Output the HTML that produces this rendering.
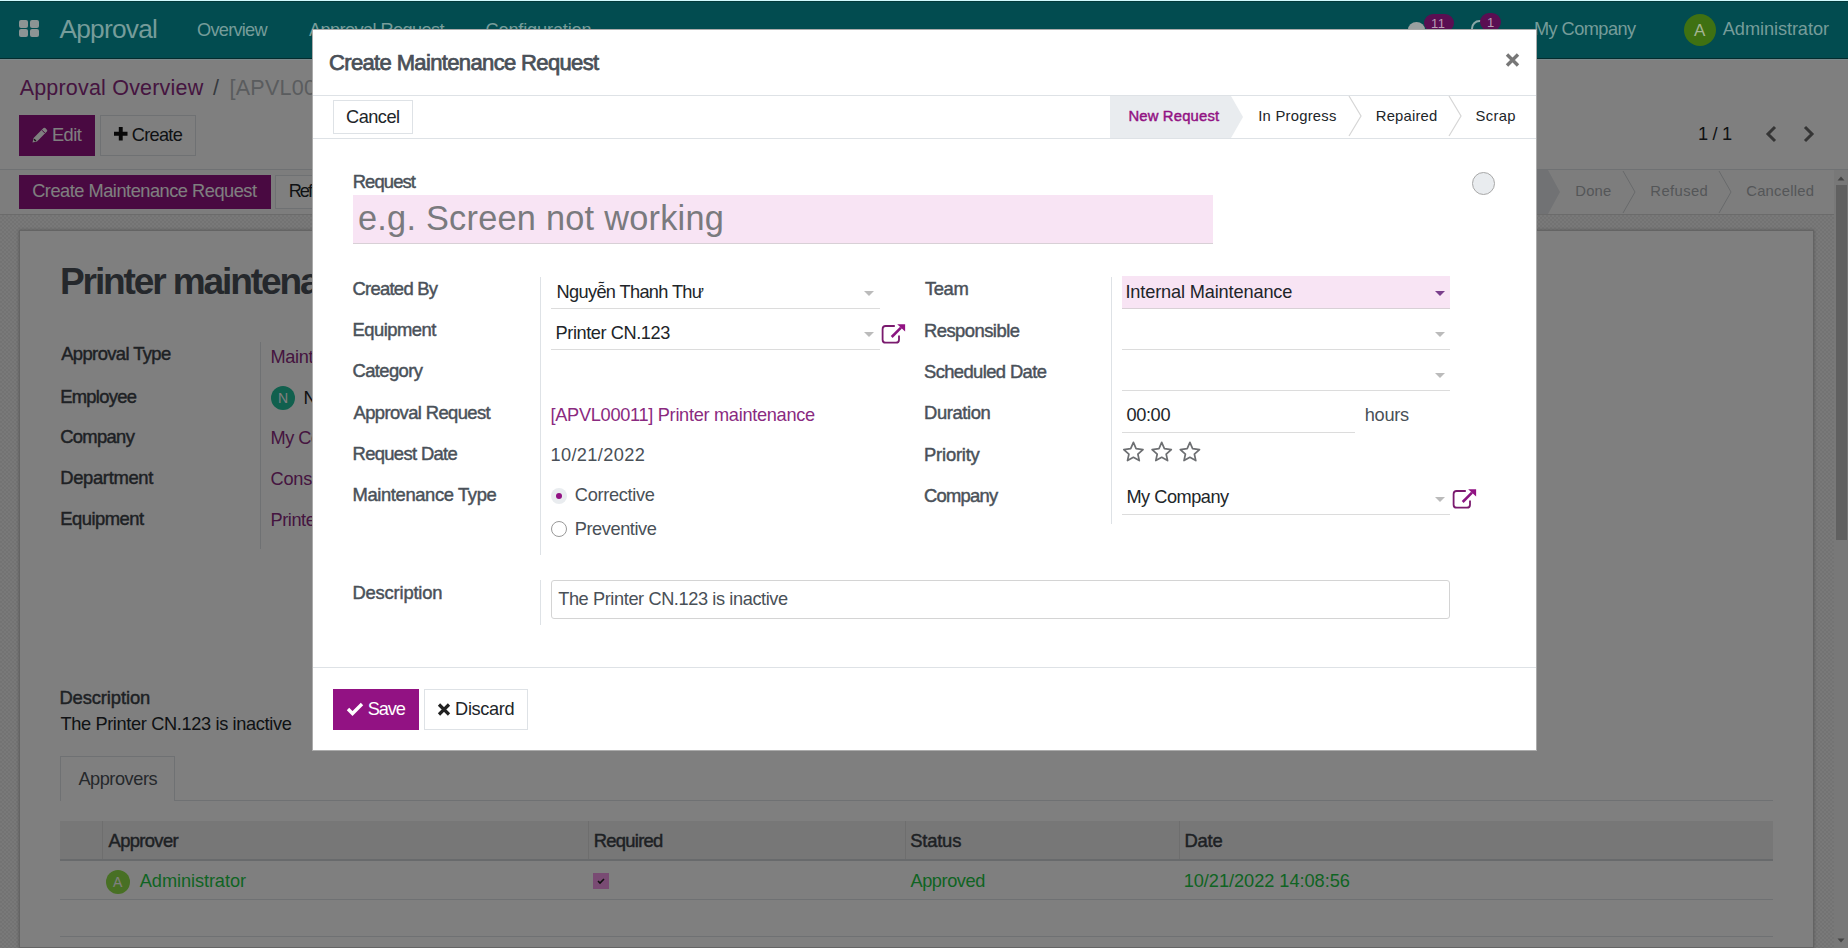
<!DOCTYPE html>
<html><head><meta charset="utf-8">
<style>
html,body{margin:0;padding:0;width:1848px;height:948px;overflow:hidden;background:#fff;font-family:"Liberation Sans",sans-serif;}
.a{position:absolute;box-sizing:border-box;}
.t{position:absolute;white-space:nowrap;font-family:"Liberation Sans",sans-serif;}
#page{position:absolute;left:0;top:0;width:1848px;height:948px;overflow:hidden;background:#fff;}
.checker{background-color:#f2f2f2;background-image:linear-gradient(45deg,#e6e6e6 25%,transparent 25%,transparent 75%,#e6e6e6 75%),linear-gradient(45deg,#e6e6e6 25%,transparent 25%,transparent 75%,#e6e6e6 75%);background-size:4px 4px;background-position:0 0,2px 2px;}
#overlay{position:absolute;left:0;top:0;width:1848px;height:948px;background:rgba(0,0,0,.5);}
#modal{position:absolute;left:312px;top:29px;width:1225px;height:722px;background:#fff;overflow:hidden;border:1px solid rgba(0,0,0,.33);box-sizing:border-box;}
.hl{position:absolute;height:1px;}
.vl{position:absolute;width:1px;}
</style></head><body>
<div id="page">
  <!-- control panel -->
  <div class="a" style="left:0;top:169px;width:1848px;height:1px;background:#dee2e6;"></div>
  <div class="a" style="left:19px;top:115px;width:76px;height:41px;background:#921283;"></div>
  <svg class="a" style="left:31px;top:126px" width="18" height="18" viewBox="0 0 18 18"><path d="M1.5 16.5 L2.6 12 L12.5 2.1 Q13.4 1.2 14.3 2.1 L15.9 3.7 Q16.8 4.6 15.9 5.5 L6 15.4 Z" fill="#fff"/><path d="M11 4.2 L13.8 7" stroke="#921283" stroke-width="1"/><path d="M3 13.2 L4.8 15" stroke="#333" stroke-width="1.6"/></svg>
  <div class="a" style="left:100px;top:115px;width:96px;height:41px;border:1px solid #dee2e6;background:#fff"></div>
  <svg class="a" style="left:113.7px;top:127px" width="14" height="14" viewBox="0 0 14 14"><path d="M4.8 0H8.7V4.8H13.5V8.7H8.7V13.5H4.8V8.7H0V4.8H4.8Z" fill="#111"/></svg>
  <!-- pager chevrons -->
  <svg class="a" style="left:1764px;top:125px" width="14" height="18" viewBox="0 0 14 18"><path d="M11 2 L4 9 L11 16" fill="none" stroke="#6a6a6a" stroke-width="3"/></svg>
  <svg class="a" style="left:1802px;top:125px" width="14" height="18" viewBox="0 0 14 18"><path d="M3 2 L10 9 L3 16" fill="none" stroke="#6a6a6a" stroke-width="3"/></svg>

  <!-- statusbar -->
  <div class="a" style="left:0;top:170px;width:1834px;height:44px;background:#fbfbfb;"></div>
  <div class="a" style="left:0;top:214px;width:1834px;height:1px;background:#d6d6d6;"></div>
  <div class="a" style="left:19px;top:175px;width:252px;height:34px;background:#921283;"></div>
  <div class="a" style="left:275px;top:175px;width:90px;height:34px;border:1px solid #dee2e6;background:#fff"></div>
  <svg class="a" style="left:1300px;top:170px" width="534" height="44" viewBox="0 0 534 44">
    <path d="M0 0 H248 L260 22 L248 44 H0 Z" fill="#e2e5e8"/>
    <path d="M323 1 L335 22 L323 43" fill="none" stroke="#d0d3d6" stroke-width="1"/>
    <path d="M419 1 L431 22 L419 43" fill="none" stroke="#d0d3d6" stroke-width="1"/>
  </svg>

  <!-- sheet background -->
  <div class="a checker" style="left:0;top:215px;width:1834px;height:733px;"></div>
  <div class="a" style="left:19px;top:230px;width:1795px;height:718px;background:#fff;border:1px solid #c8c8c8;box-shadow:0 0 3px rgba(0,0,0,.25)"></div>
  <div class="vl" style="left:260px;top:342px;height:207px;background:#dee2e6"></div>
  <div class="a" style="left:271px;top:386px;width:24px;height:24px;border-radius:50%;background:#22c09c"></div>
  <div class="t" style="left:278px;top:389px;font-size:14px;line-height:18px;color:#fff">N</div>
  <!-- tab -->
  <div class="a" style="left:60px;top:756px;width:115px;height:45px;border:1px solid #dee2e6;border-bottom:none;background:#fff"></div>
  <div class="hl" style="left:175px;top:800px;width:1598px;background:#dee2e6"></div>
  <!-- table -->
  <div class="a" style="left:60px;top:821px;width:1713px;height:40px;background:#eeeeee;border-bottom:2px solid #d0d4d8"></div>
  <div class="vl" style="left:102px;top:821px;height:38px;background:#dcdcdc"></div>
  <div class="vl" style="left:588px;top:821px;height:38px;background:#dcdcdc"></div>
  <div class="vl" style="left:905px;top:821px;height:38px;background:#dcdcdc"></div>
  <div class="vl" style="left:1179px;top:821px;height:38px;background:#dcdcdc"></div>
  <div class="hl" style="left:60px;top:899px;width:1713px;background:#dee2e6"></div>
  <div class="hl" style="left:60px;top:936px;width:1713px;background:#dee2e6"></div>
  <div class="a" style="left:106px;top:870px;width:24px;height:24px;border-radius:50%;background:#90e048"></div>
  <div class="t" style="left:113px;top:873px;font-size:14px;line-height:18px;color:#fff">A</div>
  <div class="a" style="left:593px;top:873px;width:16px;height:16px;background:#f297e6;"></div>
  <svg class="a" style="left:595px;top:875px" width="12" height="12" viewBox="0 0 12 12"><path d="M3 6 L5 8 L9 4" fill="none" stroke="#222" stroke-width="1.6"/></svg>
  <!-- scrollbar -->
  <div class="a" style="left:1834px;top:170px;width:14px;height:778px;background:#f1f1f1"></div>
  <div class="a" style="left:1836px;top:185px;width:11px;height:355px;background:#c1c1c1"></div>
  <svg class="a" style="left:1836px;top:174px" width="10" height="8" viewBox="0 0 10 8"><path d="M1.5 6.5 L5 2.5 L8.5 6.5Z" fill="#8a8a8a"/></svg>
  <svg class="a" style="left:1836px;top:936px" width="10" height="8" viewBox="0 0 10 8"><path d="M1.5 2.5 L5 6.5 L8.5 2.5Z" fill="#8a8a8a"/></svg>
  <div class="t" style="left:19.7px;top:78px;font-size:21.5px;line-height:21.5px;color:#8a2a80;letter-spacing:0.19px;">Approval Overview</div><div class="t" style="left:213.0px;top:78px;font-size:21.5px;line-height:21.5px;color:#6c757d;letter-spacing:0.00px;">/</div><div class="t" style="left:229.5px;top:78px;font-size:21.5px;line-height:21.5px;color:#b4b8bc;letter-spacing:0.27px;">[APVL00011] Printer maintenance</div><div class="t" style="left:1698.0px;top:125px;font-size:18.2px;line-height:18.2px;color:#212529;letter-spacing:-0.32px;">1 / 1</div><div class="t" style="left:1575.3px;top:184px;font-size:14.8px;line-height:14.8px;color:#a9adb1;letter-spacing:0.17px;">Done</div><div class="t" style="left:1650.3px;top:184px;font-size:14.8px;line-height:14.8px;color:#a9adb1;letter-spacing:0.40px;">Refused</div><div class="t" style="left:1746.2px;top:184px;font-size:14.8px;line-height:14.8px;color:#a9adb1;letter-spacing:0.26px;">Cancelled</div><div class="t" style="left:60.0px;top:263px;font-size:37.1px;line-height:37.1px;font-weight:bold;color:#4a5058;letter-spacing:-2.13px;">Printer maintena</div><div class="t" style="left:61.2px;top:345px;font-size:18.4px;line-height:18.4px;color:#3c4248;letter-spacing:-0.60px;-webkit-text-stroke:0.45px #3c4248;">Approval Type</div><div class="t" style="left:60.2px;top:388px;font-size:18.4px;line-height:18.4px;color:#3c4248;letter-spacing:-0.71px;-webkit-text-stroke:0.45px #3c4248;">Employee</div><div class="t" style="left:60.2px;top:428px;font-size:18.4px;line-height:18.4px;color:#3c4248;letter-spacing:-0.67px;-webkit-text-stroke:0.45px #3c4248;">Company</div><div class="t" style="left:60.2px;top:469px;font-size:18.4px;line-height:18.4px;color:#3c4248;letter-spacing:-0.33px;-webkit-text-stroke:0.45px #3c4248;">Department</div><div class="t" style="left:60.2px;top:510px;font-size:18.4px;line-height:18.4px;color:#3c4248;letter-spacing:-0.50px;-webkit-text-stroke:0.45px #3c4248;">Equipment</div><div class="t" style="left:270.4px;top:348px;font-size:18.2px;line-height:18.2px;color:#8a2a80;letter-spacing:-0.30px;">Maintenance</div><div class="t" style="left:303.6px;top:389px;font-size:18.2px;line-height:18.2px;color:#212529;letter-spacing:-0.67px;">Nguyễn Thanh Thư</div><div class="t" style="left:270.5px;top:429px;font-size:18.2px;line-height:18.2px;color:#8a2a80;letter-spacing:-0.48px;">My Company</div><div class="t" style="left:270.5px;top:470px;font-size:18.2px;line-height:18.2px;color:#8a2a80;letter-spacing:-0.22px;">Consulting</div><div class="t" style="left:270.5px;top:511px;font-size:18.2px;line-height:18.2px;color:#8a2a80;letter-spacing:-0.43px;">Printer CN.123</div><div class="t" style="left:59.4px;top:689px;font-size:18.4px;line-height:18.4px;color:#3c4248;letter-spacing:-0.11px;-webkit-text-stroke:0.45px #3c4248;">Description</div><div class="t" style="left:60.4px;top:715px;font-size:18.2px;line-height:18.2px;color:#212529;letter-spacing:-0.35px;">The Printer CN.123 is inactive</div><div class="t" style="left:78.4px;top:770px;font-size:18.2px;line-height:18.2px;color:#4c5258;letter-spacing:-0.46px;">Approvers</div><div class="t" style="left:108.5px;top:832px;font-size:18.4px;line-height:18.4px;color:#3c4248;letter-spacing:-0.64px;-webkit-text-stroke:0.45px #3c4248;">Approver</div><div class="t" style="left:593.8px;top:832px;font-size:18.4px;line-height:18.4px;color:#3c4248;letter-spacing:-0.73px;-webkit-text-stroke:0.45px #3c4248;">Required</div><div class="t" style="left:910.2px;top:832px;font-size:18.4px;line-height:18.4px;color:#3c4248;letter-spacing:-0.20px;-webkit-text-stroke:0.45px #3c4248;">Status</div><div class="t" style="left:1184.4px;top:832px;font-size:18.4px;line-height:18.4px;color:#3c4248;letter-spacing:-0.17px;-webkit-text-stroke:0.45px #3c4248;">Date</div><div class="t" style="left:139.8px;top:872px;font-size:18.2px;line-height:18.2px;color:#1ec846;letter-spacing:-0.08px;">Administrator</div><div class="t" style="left:910.5px;top:872px;font-size:18.2px;line-height:18.2px;color:#1ec846;letter-spacing:-0.44px;">Approved</div><div class="t" style="left:1183.7px;top:872px;font-size:18.2px;line-height:18.2px;color:#1ec846;letter-spacing:-0.04px;">10/21/2022 14:08:56</div><div class="t" style="left:32.2px;top:182px;font-size:18.2px;line-height:18.2px;color:#fff;letter-spacing:-0.47px;">Create Maintenance Request</div><div class="t" style="left:51.9px;top:126px;font-size:18.2px;line-height:18.2px;color:#fff;letter-spacing:-0.47px;">Edit</div><div class="t" style="left:131.8px;top:126px;font-size:18.2px;line-height:18.2px;color:#212529;letter-spacing:-0.72px;">Create</div><div class="t" style="left:288.7px;top:182px;font-size:18.2px;line-height:18.2px;color:#212529;letter-spacing:-2.00px;">Refuse</div>
</div>
<div id="overlay"></div>
<div id="nav" style="position:absolute;left:0;top:0;width:1848px;height:60px;background:#024c50;">
  <div class="a" style="left:0;top:58px;width:1848px;height:1px;background:#042c2e;"></div>
  <div class="a" style="left:0;top:59px;width:1848px;height:1px;background:#7a898b;"></div>
  <div class="a" style="left:0;top:0;width:1848px;height:1px;background:#d0fbff"></div>
  <div class="a" style="left:0;top:1px;width:1848px;height:1px;background:#033a3a"></div>
  <div class="a" style="left:19px;top:20px;width:9px;height:8px;background:#8c9494;border-radius:2px;"></div>
  <div class="a" style="left:30px;top:20px;width:9px;height:8px;background:#8c9494;border-radius:2px;"></div>
  <div class="a" style="left:19px;top:29px;width:9px;height:8px;background:#8c9494;border-radius:2px;"></div>
  <div class="a" style="left:30px;top:29px;width:9px;height:8px;background:#8c9494;border-radius:2px;"></div>
  <div class="a" style="left:1408px;top:22px;width:17px;height:15px;background:#9aa0a0;border-radius:50%;"></div>
  <div class="a" style="left:1424px;top:14px;width:30px;height:18px;background:#5a0e52;border-radius:9px;"></div>
  <div class="t" style="left:1431px;top:17px;font-size:13px;line-height:14px;color:#b89ab4;letter-spacing:0.5px">11</div>
  <div class="a" style="left:1471px;top:20px;width:17px;height:17px;border:2.5px solid #8aa6a6;border-radius:50%;"></div>
  <div class="a" style="left:1480px;top:13px;width:21px;height:18px;background:#5a0e52;border-radius:9px;"></div>
  <div class="t" style="left:1487px;top:16px;font-size:13px;line-height:14px;color:#b89ab4">1</div>
  <div class="a" style="left:1684px;top:14px;width:32px;height:32px;background:#3f7112;border-radius:50%;"></div>
  <div class="t" style="left:1694px;top:22px;font-size:17px;line-height:17px;color:#a4b494">A</div>
  <div class="t" style="left:59.5px;top:16px;font-size:26.3px;line-height:26.3px;color:rgb(118,156,154);letter-spacing:-0.77px;">Approval</div><div class="t" style="left:197.0px;top:21px;font-size:18.2px;line-height:18.2px;color:rgb(118,156,154);letter-spacing:-0.74px;">Overview</div><div class="t" style="left:309.0px;top:21px;font-size:18.2px;line-height:18.2px;color:rgb(118,156,154);letter-spacing:-0.60px;">Approval Request</div><div class="t" style="left:485.5px;top:21px;font-size:18.2px;line-height:18.2px;color:rgb(118,156,154);letter-spacing:-0.17px;">Configuration</div><div class="t" style="left:1534.0px;top:20px;font-size:18.2px;line-height:18.2px;color:rgb(118,156,154);letter-spacing:-0.56px;">My Company</div><div class="t" style="left:1722.8px;top:20px;font-size:18.2px;line-height:18.2px;color:rgb(118,156,154);letter-spacing:-0.08px;">Administrator</div>
</div>

<div id="modal">
  <!-- positions inside modal are page coords minus (313,30) -->
  <div style="position:absolute;left:-313px;top:-30px;width:1848px;height:948px;">
    <!-- close x -->
    <svg class="a" style="left:1505px;top:53px" width="15" height="14" viewBox="0 0 15 14"><path d="M2 1.5 L13 12.5 M13 1.5 L2 12.5" stroke="#777" stroke-width="3.4"/></svg>
    <div class="hl" style="left:313px;top:95px;width:1223px;background:#dee2e6"></div>
    <div class="hl" style="left:313px;top:138px;width:1223px;background:#dee2e6"></div>
    <!-- cancel -->
    <div class="a" style="left:333px;top:100px;width:80px;height:34px;border:1px solid #dee2e6;"></div>
    <!-- statusbar -->
    <svg class="a" style="left:1110px;top:96px" width="426" height="42" viewBox="0 0 426 42">
      <path d="M0 0 H121 L133 21 L121 42 H0 Z" fill="#e9ecef"/>
      <path d="M239 0 L251 20 L239 40" fill="none" stroke="#d6d6d6" stroke-width="1.2"/>
      <path d="M339 0 L351 20 L339 40" fill="none" stroke="#d6d6d6" stroke-width="1.2"/>
    </svg>
    <!-- request field -->
    <div class="a" style="left:353px;top:195px;width:860px;height:49px;background:#f8e4f4;border-bottom:1px solid #d8d0d6"></div>
    <div class="a" style="left:1472px;top:172px;width:23px;height:23px;border-radius:50%;background:#e9ecef;border:1px solid #a8a8a8"></div>
    <!-- group lines -->
    <div class="vl" style="left:540px;top:277px;height:278px;background:#dee2e6"></div>
    <div class="vl" style="left:1111px;top:277px;height:247px;background:#dee2e6"></div>
    <div class="vl" style="left:540px;top:580px;height:45px;background:#dee2e6"></div>
    <!-- underlines left -->
    <div class="hl" style="left:551px;top:308px;width:329px;background:#dcdcdc"></div>
    <div class="hl" style="left:551px;top:349px;width:329px;background:#dcdcdc"></div>
    <svg class="a" style="left:864px;top:291px" width="10" height="5" viewBox="0 0 10 5"><path d="M0 0H10L5 5Z" fill="#bbb"/></svg>
    <svg class="a" style="left:864px;top:332px" width="10" height="5" viewBox="0 0 10 5"><path d="M0 0H10L5 5Z" fill="#bbb"/></svg>
    <!-- ext link icons -->
    <svg class="a" style="left:880px;top:322px" width="27" height="23" viewBox="0 0 27 23"><path d="M14.8 4 H5.6 Q2.6 4 2.6 7 V17.7 Q2.6 20.7 5.6 20.7 H16 Q19 20.7 19 17.7 V13.6" fill="none" stroke="#7a1a6e" stroke-width="1.8"/><path d="M11.7 15 L21 5.7" stroke="#8a1580" stroke-width="2.6"/><path d="M17.2 2.2 H25.1 V9.6 Z" fill="#921283"/></svg>
    <svg class="a" style="left:1451.3px;top:487px" width="27" height="23" viewBox="0 0 27 23"><path d="M14.8 4 H5.6 Q2.6 4 2.6 7 V17.7 Q2.6 20.7 5.6 20.7 H16 Q19 20.7 19 17.7 V13.6" fill="none" stroke="#7a1a6e" stroke-width="1.8"/><path d="M11.7 15 L21 5.7" stroke="#8a1580" stroke-width="2.6"/><path d="M17.2 2.2 H25.1 V9.6 Z" fill="#921283"/></svg>
    <!-- radios -->
    <div class="a" style="left:551px;top:488px;width:16px;height:16px;border-radius:50%;background:#e9ecef;"></div>
    <div class="a" style="left:556px;top:493px;width:6px;height:6px;border-radius:50%;background:#921283;"></div>
    <div class="a" style="left:551px;top:521px;width:16px;height:16px;border-radius:50%;background:#fff;border:1px solid #999"></div>
    <!-- description box -->
    <div class="a" style="left:551px;top:580px;width:899px;height:39px;border:1px solid #d4d4d4;border-radius:3px"></div>
    <!-- right fields -->
    <div class="a" style="left:1122px;top:276px;width:328px;height:33px;background:#f8e4f4;border-bottom:1px solid #d8d0d6"></div>
    <svg class="a" style="left:1435px;top:291px" width="10" height="5" viewBox="0 0 10 5"><path d="M0 0H10L5 5Z" fill="#7a3f8c"/></svg>
    <div class="hl" style="left:1122px;top:349px;width:328px;background:#dcdcdc"></div>
    <svg class="a" style="left:1435px;top:332px" width="10" height="5" viewBox="0 0 10 5"><path d="M0 0H10L5 5Z" fill="#bbb"/></svg>
    <div class="hl" style="left:1122px;top:390px;width:328px;background:#dcdcdc"></div>
    <svg class="a" style="left:1435px;top:373px" width="10" height="5" viewBox="0 0 10 5"><path d="M0 0H10L5 5Z" fill="#bbb"/></svg>
    <div class="hl" style="left:1122px;top:432px;width:233px;background:#dcdcdc"></div>
    <div class="hl" style="left:1122px;top:514px;width:328px;background:#dcdcdc"></div>
    <svg class="a" style="left:1435px;top:497px" width="10" height="5" viewBox="0 0 10 5"><path d="M0 0H10L5 5Z" fill="#bbb"/></svg>
    <!-- stars -->
    <svg class="a" style="left:1118px;top:438px" width="90" height="28" viewBox="0 0 90 28"><g fill="none" stroke="#6d6f72" stroke-width="1.7" stroke-linejoin="round"><path d="M15.4 4.3 L18.1 10.6 L25.0 11.6 L19.9 16.2 L21.3 22.6 L15.4 19.3 L9.5 22.6 L10.9 16.2 L5.8 11.6 L12.7 10.6 Z"/><path d="M43.7 4.3 L46.4 10.6 L53.3 11.6 L48.2 16.2 L49.6 22.6 L43.7 19.3 L37.8 22.6 L39.2 16.2 L34.1 11.6 L41.0 10.6 Z"/><path d="M71.9 4.3 L74.6 10.6 L81.5 11.6 L76.4 16.2 L77.8 22.6 L71.9 19.3 L66.0 22.6 L67.4 16.2 L62.3 11.6 L69.2 10.6 Z"/></g></svg>
    <!-- footer -->
    <div class="hl" style="left:313px;top:667px;width:1223px;background:#dee2e6"></div>
    <div class="a" style="left:333px;top:689px;width:86px;height:41px;background:#921283;"></div>
    <svg class="a" style="left:346px;top:702px" width="18" height="14" viewBox="0 0 18 14"><path d="M2 7 L6.5 11.5 L16 2" fill="none" stroke="#fff" stroke-width="3.4"/></svg>
    <div class="a" style="left:424px;top:689px;width:104px;height:41px;border:1px solid #dee2e6;"></div>
    <svg class="a" style="left:437px;top:703px" width="14" height="13" viewBox="0 0 14 13"><path d="M2 1.5 L12 11.5 M12 1.5 L2 11.5" stroke="#222" stroke-width="3.2"/></svg>
    <div class="t" style="left:329.0px;top:52px;font-size:22px;line-height:22px;color:#4a5058;letter-spacing:-0.64px;-webkit-text-stroke:0.75px #4a5058;">Create Maintenance Request</div><div class="t" style="left:346.0px;top:108px;font-size:18.2px;line-height:18.2px;color:#212529;letter-spacing:-0.50px;">Cancel</div><div class="t" style="left:1128.4px;top:109px;font-size:14.8px;line-height:14.8px;color:#921283;letter-spacing:0.19px;-webkit-text-stroke:0.45px #921283;">New Request</div><div class="t" style="left:1258.2px;top:109px;font-size:14.8px;line-height:14.8px;color:#212529;letter-spacing:0.25px;">In Progress</div><div class="t" style="left:1375.8px;top:109px;font-size:14.8px;line-height:14.8px;color:#212529;letter-spacing:0.19px;">Repaired</div><div class="t" style="left:1475.6px;top:109px;font-size:14.8px;line-height:14.8px;color:#212529;letter-spacing:0.30px;">Scrap</div><div class="t" style="left:352.7px;top:173px;font-size:18.4px;line-height:18.4px;color:#4a5159;letter-spacing:-0.88px;-webkit-text-stroke:0.45px #4a5159;">Request</div><div class="t" style="left:358.0px;top:201px;font-size:34.3px;line-height:34.3px;color:#7a7a7e;letter-spacing:0.25px;">e.g. Screen not working</div><div class="t" style="left:352.5px;top:280px;font-size:18.4px;line-height:18.4px;color:#4a5159;letter-spacing:-0.72px;-webkit-text-stroke:0.45px #4a5159;">Created By</div><div class="t" style="left:352.5px;top:321px;font-size:18.4px;line-height:18.4px;color:#4a5159;letter-spacing:-0.50px;-webkit-text-stroke:0.45px #4a5159;">Equipment</div><div class="t" style="left:352.5px;top:362px;font-size:18.4px;line-height:18.4px;color:#4a5159;letter-spacing:-0.60px;-webkit-text-stroke:0.45px #4a5159;">Category</div><div class="t" style="left:353.5px;top:404px;font-size:18.4px;line-height:18.4px;color:#4a5159;letter-spacing:-0.60px;-webkit-text-stroke:0.45px #4a5159;">Approval Request</div><div class="t" style="left:352.5px;top:445px;font-size:18.4px;line-height:18.4px;color:#4a5159;letter-spacing:-0.65px;-webkit-text-stroke:0.45px #4a5159;">Request Date</div><div class="t" style="left:352.5px;top:486px;font-size:18.4px;line-height:18.4px;color:#4a5159;letter-spacing:-0.38px;-webkit-text-stroke:0.45px #4a5159;">Maintenance Type</div><div class="t" style="left:352.5px;top:584px;font-size:18.4px;line-height:18.4px;color:#4a5159;letter-spacing:-0.20px;-webkit-text-stroke:0.45px #4a5159;">Description</div><div class="t" style="left:925.0px;top:280px;font-size:18.4px;line-height:18.4px;color:#4a5159;letter-spacing:-0.40px;-webkit-text-stroke:0.45px #4a5159;">Team</div><div class="t" style="left:924.0px;top:322px;font-size:18.4px;line-height:18.4px;color:#4a5159;letter-spacing:-0.53px;-webkit-text-stroke:0.45px #4a5159;">Responsible</div><div class="t" style="left:924.0px;top:363px;font-size:18.4px;line-height:18.4px;color:#4a5159;letter-spacing:-0.61px;-webkit-text-stroke:0.45px #4a5159;">Scheduled Date</div><div class="t" style="left:924.0px;top:404px;font-size:18.4px;line-height:18.4px;color:#4a5159;letter-spacing:-0.40px;-webkit-text-stroke:0.45px #4a5159;">Duration</div><div class="t" style="left:924.0px;top:446px;font-size:18.4px;line-height:18.4px;color:#4a5159;letter-spacing:-0.20px;-webkit-text-stroke:0.45px #4a5159;">Priority</div><div class="t" style="left:924.0px;top:487px;font-size:18.4px;line-height:18.4px;color:#4a5159;letter-spacing:-0.77px;-webkit-text-stroke:0.45px #4a5159;">Company</div><div class="t" style="left:556.5px;top:283px;font-size:18.2px;line-height:18.2px;color:#212529;letter-spacing:-0.64px;">Nguyễn Thanh Thư</div><div class="t" style="left:555.6px;top:324px;font-size:18.2px;line-height:18.2px;color:#212529;letter-spacing:-0.43px;">Printer CN.123</div><div class="t" style="left:550.5px;top:406px;font-size:18.2px;line-height:18.2px;color:#8a2a80;letter-spacing:-0.30px;">[APVL00011] Printer maintenance</div><div class="t" style="left:550.5px;top:446px;font-size:18.2px;line-height:18.2px;color:#495057;letter-spacing:0.36px;">10/21/2022</div><div class="t" style="left:574.8px;top:486px;font-size:18.2px;line-height:18.2px;color:#495057;letter-spacing:-0.30px;">Corrective</div><div class="t" style="left:574.8px;top:520px;font-size:18.2px;line-height:18.2px;color:#495057;letter-spacing:-0.43px;">Preventive</div><div class="t" style="left:558.2px;top:590px;font-size:18.2px;line-height:18.2px;color:#495057;letter-spacing:-0.40px;">The Printer CN.123 is inactive</div><div class="t" style="left:1125.4px;top:283px;font-size:18.2px;line-height:18.2px;color:#212529;letter-spacing:-0.15px;">Internal Maintenance</div><div class="t" style="left:1126.4px;top:406px;font-size:18.2px;line-height:18.2px;color:#212529;letter-spacing:-0.35px;">00:00</div><div class="t" style="left:1364.7px;top:406px;font-size:18.2px;line-height:18.2px;color:#495057;letter-spacing:-0.25px;">hours</div><div class="t" style="left:1126.4px;top:488px;font-size:18.2px;line-height:18.2px;color:#212529;letter-spacing:-0.48px;">My Company</div><div class="t" style="left:367.7px;top:700px;font-size:18.2px;line-height:18.2px;color:#fff;letter-spacing:-1.10px;">Save</div><div class="t" style="left:455.1px;top:700px;font-size:18.2px;line-height:18.2px;color:#212529;letter-spacing:-0.35px;">Discard</div>
  </div>
</div>
</body></html>
